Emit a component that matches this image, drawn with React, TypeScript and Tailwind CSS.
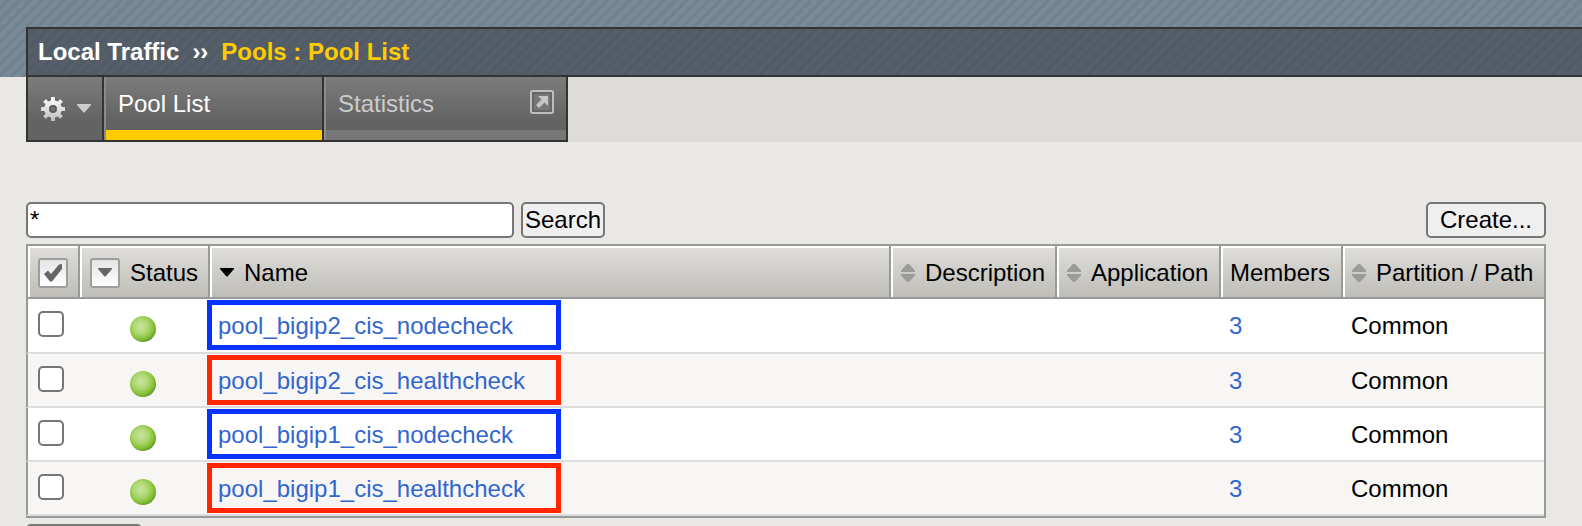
import type { ReactNode } from "react";

type Pool = { name: string; box: string; members: number; partition: string };

const pools: Pool[] = [
  { name: "pool_bigip2_cis_nodecheck", box: "border-[#0433ff]", members: 3, partition: "Common" },
  { name: "pool_bigip2_cis_healthcheck", box: "border-[#ff2600]", members: 3, partition: "Common" },
  { name: "pool_bigip1_cis_nodecheck", box: "border-[#0433ff]", members: 3, partition: "Common" },
  { name: "pool_bigip1_cis_healthcheck", box: "border-[#ff2600]", members: 3, partition: "Common" },
];

const teeth = [0, 45, 90, 135, 180, 225, 270, 315];

function Gear() {
  return (
    <svg width="28" height="28" viewBox="0 0 28 28" aria-hidden="true">
      <defs>
        <linearGradient id="gear" gradientUnits="userSpaceOnUse" x1="0" y1="2" x2="0" y2="26">
          <stop offset="0" stopColor="#ffffff" />
          <stop offset="1" stopColor="#bdbdbd" />
        </linearGradient>
        <mask id="gear-shape">
          {teeth.map((angle) => (
            <rect key={angle} x="12" y="2" width="4" height="7" rx="0.5" fill="#fff" transform={`rotate(${angle} 14 14)`} />
          ))}
          <circle cx="14" cy="14" r="9" fill="#fff" />
          <circle cx="14" cy="14" r="4" fill="#000" />
        </mask>
      </defs>
      <circle cx="14" cy="14" r="10.500" fill="#555" opacity="0.5" />
      <circle cx="14" cy="14" r="4.500" fill="#5a5a5a" />
      <circle cx="14" cy="14" r="2" fill="#777" />
      <rect width="28" height="28" fill="url(#gear)" mask="url(#gear-shape)" />
    </svg>
  );
}

function Caret({ color }: { color: string }) {
  return (
    <svg width="14" height="9" viewBox="0 0 14 9" className="shrink-0" aria-hidden="true">
      <path d="M0 0h14v1L7.500 8.500h-1L0 1z" fill={color} />
    </svg>
  );
}

function SortArrows() {
  return (
    <svg width="14" height="18" viewBox="0 0 14 18" className="shrink-0" aria-hidden="true">
      <path d="M6 0h2l6 6.500V8H0V6.500zM0 10h14v1.500L8 18H6l-6-6.500z" fill="#9b9b9b" />
    </svg>
  );
}

function ExternalIcon() {
  return (
    <svg width="24" height="24" viewBox="0 0 24 24" aria-hidden="true">
      <rect x="1" y="1" width="22" height="22" rx="1.500" fill="#777" stroke="#bdbdbd" strokeWidth="2" />
      <rect x="3" y="3" width="18" height="18" fill="none" stroke="#666" strokeWidth="2" />
      <path d="M8 6h10v10l-3.500-3.500L9 18l-3-3 5.500-5.500z" fill="#c6c6c6" />
    </svg>
  );
}

function StatusDot({ id }: { id: string }) {
  return (
    <svg width="26" height="26" viewBox="0 0 26 26" role="img" aria-label="Available" className="block">
      <defs>
        <radialGradient id={id} cx="0.42" cy="0.4" r="0.62">
          <stop offset="0" stopColor="#c8e6a0" />
          <stop offset="0.45" stopColor="#aed873" />
          <stop offset="0.8" stopColor="#85c134" />
          <stop offset="1" stopColor="#5f962f" />
        </radialGradient>
      </defs>
      <circle cx="13" cy="13" r="13" fill={`url(#${id})`} />
    </svg>
  );
}

function Th({ children }: { children: ReactNode }) {
  return (
    <th
      scope="col"
      className="h-[53px] border-b-2 border-l-2 border-[#999] bg-linear-to-b from-[#dfdeda] to-[#bfbdb8] p-0 text-left font-normal"
    >
      <div className="flex h-[51px] items-center border-t-2 border-l-2 border-white">{children}</div>
    </th>
  );
}

export default function App() {
  return (
    <div className="min-h-screen overflow-hidden bg-[#e9e8e4] font-['Liberation_Sans',Arial,sans-serif] text-2xl leading-7 text-black">
      <header className="bg-[#748694] bg-[repeating-linear-gradient(135deg,#788a97_0px,#788a97_3px,#718391_5px,#718391_7px,#788a97_8px)] pt-[27px] pl-[26px]">
        <h1 className="flex h-[50px] items-center border-y-2 border-l-2 border-[#333] bg-[#535d67] bg-[repeating-linear-gradient(135deg,#565f69_0px,#565f69_3px,#515b65_5px,#515b65_7px,#565f69_8px)] pl-[10px] font-bold text-white">
          <span>Local Traffic</span>
          <span className="ml-[13px]">››</span>
          <span className="ml-[13px] text-[#fc0]">Pools : Pool List</span>
        </h1>
      </header>

      <div className="flex pl-[26px]">
        <nav className="flex h-[65px] border-x-2 border-b-2 border-[#333]">
          <button
            type="button"
            aria-label="Options"
            className="flex w-[76px] items-center gap-[10px] border-r-2 border-[#333] bg-linear-to-b from-[#7c7c7c] to-[#636363] to-70% pl-[11px]"
          >
            <Gear />
            <Caret color="#ccc" />
          </button>
          <a
            href="#pools"
            className="w-[220px] border-r-2 border-l-2 border-r-[#333] border-l-[#8c8c8c] bg-linear-to-b from-[#7c7c7c] to-[#636363] to-70% text-white"
          >
            <span className="flex h-[63px] border-b-10 border-[#fc0] pt-[13px] pl-3">Pool List</span>
          </a>
          <a
            href="#statistics"
            className="w-[242px] border-l-2 border-[#8c8c8c] bg-linear-to-b from-[#7c7c7c] to-[#636363] to-70% text-[#ccc]"
          >
            <span className="flex h-[63px] items-start justify-between border-b-10 border-[#777] pt-[13px] pr-3 pl-3">
              Statistics
              <ExternalIcon />
            </span>
          </a>
        </nav>
        <div className="flex-1 bg-[#dddcd8]" />
      </div>

      <main className="pt-[60px] pr-9 pl-[26px]">
        <form className="flex h-9" onSubmit={(e) => e.preventDefault()}>
          <input
            type="text"
            aria-label="Search pools"
            defaultValue="*"
            className="w-[488px] rounded-[5px] border-2 border-[#767676] bg-white px-[2px]"
          />
          <button type="submit" className="ml-[7px] w-[84px] rounded-[5px] border-2 border-[#767676] bg-[#efefef]">
            Search
          </button>
          <button type="button" className="ml-auto w-[120px] rounded-[5px] border-2 border-[#767676] bg-[#efefef]">
            Create...
          </button>
        </form>

        <table className="mt-[6px] w-full table-fixed border-separate border-spacing-0 border-t-2 border-r-2 border-b-2 border-[#999]">
          <colgroup>
            <col className="w-[52px]" />
            <col className="w-[130px]" />
            <col />
            <col className="w-[166px]" />
            <col className="w-[164px]" />
            <col className="w-[122px]" />
            <col className="w-[203px]" />
          </colgroup>
          <thead>
            <tr>
              <Th>
                <button
                  type="button"
                  aria-label="Select all"
                  className="ml-2 flex size-[30px] items-center justify-center rounded-[3px] border-2 border-[#9d9d9d] bg-linear-to-b from-[#e4e4e4] to-white"
                >
                  <svg width="20" height="20" viewBox="0 0 20 20" aria-hidden="true">
                    <path d="M1 11l4-3.500 3 3.500 8-9.500 3-.5v5L9 18.500H7z" fill="#666" />
                  </svg>
                </button>
              </Th>
              <Th>
                <button
                  type="button"
                  aria-label="Filter by status"
                  className="mr-[10px] ml-2 flex size-[30px] items-center justify-center rounded-[3px] border-2 border-[#9d9d9d] bg-linear-to-b from-[#e4e4e4] to-white"
                >
                  <Caret color="#666" />
                </button>
                Status
              </Th>
              <Th>
                <span className="mr-[10px] ml-2 flex">
                  <Caret color="#000" />
                </span>
                Name
              </Th>
              <Th>
                <span className="mr-[10px] ml-2 flex">
                  <SortArrows />
                </span>
                Description
              </Th>
              <Th>
                <span className="mr-[10px] ml-2 flex">
                  <SortArrows />
                </span>
                Application
              </Th>
              <Th>
                <span className="pl-[7px]">Members</span>
              </Th>
              <Th>
                <span className="mr-[10px] ml-[7px] flex">
                  <SortArrows />
                </span>
                <span className="whitespace-nowrap">Partition / Path</span>
              </Th>
            </tr>
          </thead>
          <tbody className="[&_td]:h-[54px] [&_td]:border-b-2 [&_td]:border-[#ddd] [&_td]:p-0 [&_td]:align-top [&_tr:first-child_td]:h-[55px]">
            {pools.map((pool) => (
              <tr key={pool.name} className="odd:bg-white even:bg-[#f7f6f5]">
                <td className="border-l-2 border-l-[#999]!">
                  <input
                    type="checkbox"
                    aria-label={`Select ${pool.name}`}
                    className="mt-3 ml-[10px] block size-[26px] appearance-none rounded-[5px] border-2 border-[#767676] bg-white checked:bg-[#767676]"
                  />
                </td>
                <td>
                  <div className="pt-[17px] pl-[52px]">
                    <StatusDot id={`dot-${pool.name}`} />
                  </div>
                </td>
                <td className="relative">
                  <a href={`#${pool.name}`} className="block pt-[13px] pl-[10px] text-[#36c]">
                    {pool.name}
                  </a>
                  <span className={`pointer-events-none absolute top-px -left-px h-[50px] w-[354px] border-[5px] ${pool.box}`} />
                </td>
                <td />
                <td />
                <td>
                  <a href={`#${pool.name}-members`} className="block pt-[13px] pl-[10px] text-[#36c]">
                    {pool.members}
                  </a>
                </td>
                <td>
                  <div className="pt-[13px] pl-[10px]">{pool.partition}</div>
                </td>
              </tr>
            ))}
          </tbody>
        </table>

        <button
          type="button"
          aria-label="Delete"
          className="mt-[6px] block h-9 w-[116px] rounded-[5px] border-2 border-[#767676] bg-[#efefef]"
        />
      </main>
    </div>
  );
}
